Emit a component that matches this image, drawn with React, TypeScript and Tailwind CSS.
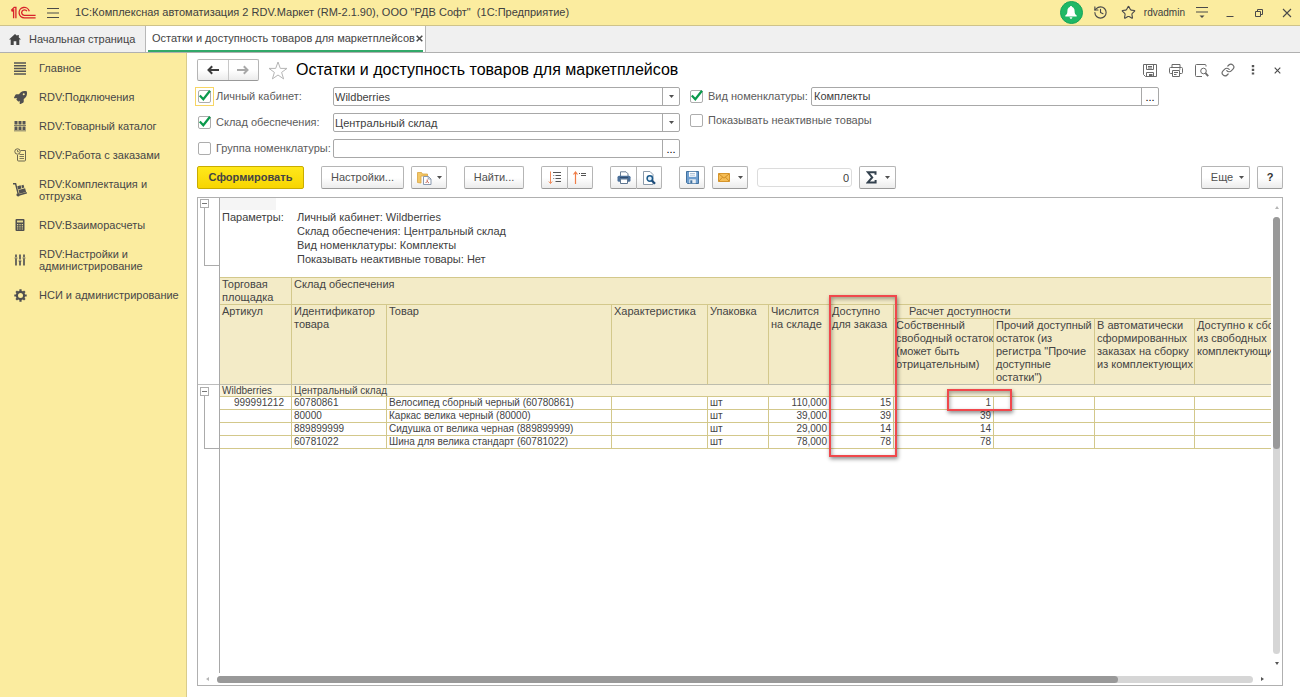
import type { ReactNode } from "react";
import { FaRocket } from "react-icons/fa";
import { History, Link, Star } from "lucide-react";

/* ---------- icons ---------- */

const Logo = () => (
  <svg width="26" height="14" viewBox="0 0 26 14" fill="none" stroke="#d8232a" strokeWidth="1.3" aria-hidden="true">
    <path d="M1.2 4.4 4.2 1.4h1.7v10.8M1.6 5.4 3.6 4v8.2" />
    <path d="M19.3 5.2A5.2 5.2 0 1 0 14.3 11.8H25.6" />
    <path d="M16.9 5.2A2.8 2.8 0 1 0 14.3 9.4H25.6" />
  </svg>
);

const BurgerIcon = () => (
  <svg width="14" height="12" viewBox="0 0 14 12" stroke="#4a4a4a" strokeWidth="1.2" aria-hidden="true">
    <path d="M1 1.5h12M1 6h12M1 10.5h12" />
  </svg>
);

const BellIcon = () => (
  <svg width="12" height="13" viewBox="0 0 12 13" fill="#fff" aria-hidden="true">
    <path d="M6 0c.7 0 1.1.5 1.1 1.1C8.800 1.600 9.600 3 9.600 5c0 2.600.8 3.600 2.100 4.600v.9H.3v-.9C1.600 8.600 2.400 7.600 2.400 5c0-2 .8-3.400 2.500-3.900C4.900.5 5.300 0 6 0zM4.600 11.300h2.800c0 .9-.6 1.500-1.400 1.500s-1.400-.6-1.400-1.500z" />
  </svg>
);

const UserMenuIcon = () => (
  <svg width="14" height="13" viewBox="0 0 14 13" stroke="#4a4a4a" strokeWidth="1.2" aria-hidden="true">
    <path d="M1 1.500h12M1 6h12" />
    <path d="M4.500 9.500h5L7 12z" fill="#4a4a4a" stroke="none" />
  </svg>
);

const MinimizeIcon = () => (
  <svg width="10" height="10" viewBox="0 0 10 10" stroke="#4a4a4a" aria-hidden="true">
    <path d="M1.500 8.500h7" />
  </svg>
);

const RestoreIcon = () => (
  <svg width="10" height="10" viewBox="0 0 10 10" fill="none" stroke="#4a4a4a" aria-hidden="true">
    <path d="M1.500 3.500h5v5h-5zM3.500 3.500v-2h5v5h-2" />
  </svg>
);

const CloseIcon = ({ size = 10, width = 1.1 }: { size?: number; width?: number }) => (
  <svg width={size} height={size} viewBox="0 0 10 10" stroke="#4a4a4a" strokeWidth={width} aria-hidden="true">
    <path d="M1 1l8 8M9 1 1 9" />
  </svg>
);

const HomeIcon = () => (
  <svg width="12" height="11" viewBox="0 0 12 11" fill="#444" aria-hidden="true">
    <path d="M6 0 0 5.600h1.700V11h3V7.300h2.600V11h3V5.600H12L9.800 3.500V1H8.300v1.100z" />
  </svg>
);

const LinesIcon = () => (
  <svg width="12" height="13" viewBox="0 0 12 13" stroke="#555" strokeWidth="1.300" aria-hidden="true">
    <path d="M0 1h12M0 3.750h12M0 6.500h12M0 9.250h12M0 12h12" />
  </svg>
);

const ShelvesIcon = () => (
  <svg width="12" height="12" viewBox="0 0 12 12" fill="#555" aria-hidden="true">
    <path d="M.5 1h3v3.500h-3zM4.500 1h3v3.500h-3zM8.500 1h3v3.500h-3zM.5 6.500h3V10h-3zM4.500 6.500h3V10h-3zM8.500 6.500h3V10h-3z" />
    <path d="M0 5h12v.8H0zM0 10.400h12v.9H0z" />
  </svg>
);

const OrdersIcon = () => (
  <svg width="13" height="14" viewBox="0 0 13 14" fill="none" stroke="#6b6650" aria-hidden="true">
    <path d="M6.500 2.500h5v9.500q0 1-1 1H4.500q-1 0-1-1V7" />
    <circle cx="3.500" cy="3.500" r="2.700" />
    <path d="M3.500 2v1.700h1.300M5.500 6.500H10M5.500 8.500H10M5.500 10.500H10" strokeWidth=".9" />
  </svg>
);

const TrolleyIcon = () => (
  <svg width="14" height="14" viewBox="0 0 14 14" fill="#505050" aria-hidden="true">
    <path d="M0 .8h2.600L5 10.200" fill="none" stroke="#505050" strokeWidth="1.400" />
    <circle cx="5.200" cy="11.800" r="1.800" />
    <path d="M6.800 11.700 13.800 9.800" stroke="#505050" strokeWidth="1.400" />
    <path d="m4.300 3.200 3.300-.9.9 3.200-3.300.9zM5.500 7.100l6.600-1.800 1 3.600-6.600 1.800zM8.300 2.400l2.200-.6.8 2.800-2.200.6z" />
  </svg>
);

const CalculatorIcon = () => (
  <svg width="10" height="12" viewBox="0 0 10 12" aria-hidden="true">
    <rect x=".5" width="9" height="12" rx="1" fill="#4f4f4f" />
    <path d="M2 1.500h6v2H2zM2 5h1.300v1.200H2zM4.400 5h1.200v1.200H4.400zM6.700 5H8v1.200H6.700zM2 7.200h1.300v1.200H2zM4.400 7.200h1.200v1.200H4.400zM6.700 7.200H8v1.200H6.700zM2 9.400h1.300v1.200H2zM4.400 9.400h1.200v1.200H4.400zM6.700 9.400H8v1.200H6.700z" fill="#e6d992" />
  </svg>
);

const SlidersIcon = () => (
  <svg width="12" height="12" viewBox="0 0 12 12" stroke="#555" strokeWidth="1.700" aria-hidden="true">
    <path d="M2 .5v2.500M2 4.500v7M6 .5v5M6 7v4.500M10 .5v2.500M10 4.500v7" />
    <path d="M.6 4h2.800M4.600 7h2.800M8.600 4h2.800" strokeWidth="1" />
  </svg>
);

const GearIcon = () => (
  <svg width="13" height="13" viewBox="-6.500 -6.500 13 13" fill="none" stroke="#4f4f4f" aria-hidden="true">
    <circle r="3.600" strokeWidth="2.200" />
    <path d="M0-6.200v2M0 6.200v-2M-6.200 0h2M6.200 0h-2M-4.300-4.300l1.400 1.400M4.300-4.300 2.900-2.900M-4.300 4.300l1.400-1.400M4.300 4.300 2.900 2.900" strokeWidth="2.200" />
  </svg>
);

const ArrowIcon = ({ dir, color }: { dir: "left" | "right"; color: string }) => (
  <svg width="12" height="10" viewBox="0 0 12 10" fill="none" stroke={color} strokeWidth="2" aria-hidden="true">
    {dir === "left" ? <path d="M12 5H2M5.200 1.300 1.500 5l3.700 3.700" /> : <path d="M0 5h10M6.800 1.300 10.500 5 6.800 8.700" />}
  </svg>
);

const FavouriteIcon = () => (
  <svg width="20" height="19" viewBox="0 0 20 19" fill="#fff" stroke="#b5b5b5" aria-hidden="true">
    <path d="M10 1l2.300 6.400h6.700l-5.400 4 2 6.500L10 14l-5.600 3.900 2-6.500-5.400-4h6.700z" />
  </svg>
);

const SaveIcon = () => (
  <svg width="14" height="13" viewBox="0 0 14 13" fill="none" stroke="#6a6a6a" aria-hidden="true">
    <path d="M.5.5h13v12h-11l-2-2zM3.500.5v5h7v-5M3.500 12.500v-4h7v4M5 2.500h4M5 4h4" />
    <path d="M6 10h3.500v2.500H6z" fill="#6a6a6a" stroke="none" />
  </svg>
);

const PrintIcon = () => (
  <svg width="14" height="13" viewBox="0 0 14 13" fill="none" stroke="#6a6a6a" aria-hidden="true">
    <path d="M3 3.500v-3h8v3M3 9.500H1.500q-1 0-1-1v-4q0-1 1-1h11q1 0 1 1v4q0 1-1 1H11M3.500 6.500h7v6h-7zM5 8.500h4M5 10.500h2.500M10 5h1.500" />
  </svg>
);

const PreviewIcon = () => (
  <svg width="14" height="13" viewBox="0 0 14 13" fill="none" stroke="#6a6a6a" aria-hidden="true">
    <path d="M11 2.500v-1q0-1-1-1H1.500q-1 0-1 1v10q0 1 1 1H7" />
    <circle cx="8.500" cy="7" r="2.800" />
    <path d="m10.500 9.200 2.700 3" strokeWidth="1.800" />
  </svg>
);

const DotsIcon = () => (
  <svg width="4" height="12" viewBox="0 0 4 12" fill="#555" aria-hidden="true">
    <path d="M.8 1h2.400v2.200H.8zM.8 4.700h2.400v2.200H.8zM.8 8.400h2.400v2.200H.8z" />
  </svg>
);

const Caret = () => (
  <svg width="5" height="3" viewBox="0 0 5 3" fill="#505050" aria-hidden="true">
    <path d="M0 0h5L2.500 3z" />
  </svg>
);

const FoldersIcon = () => (
  <svg width="15" height="14" viewBox="0 0 15 14" aria-hidden="true">
    <path d="M.5 11.500V1.500h4l1 1.500h5v2H4v7z" fill="#f3c766" stroke="#d9a441" strokeWidth=".8" />
    <path d="M6.500 5.500h5l2.500 2.500v5.500H6.500z" fill="#fff" stroke="#7d8fa6" strokeWidth=".9" />
    <path d="M11.200 5.500V8H14" fill="none" stroke="#7d8fa6" strokeWidth=".8" />
    <path d="M10.200 8.500v2M8.600 12l1.600-1.600 1.700 1.600" fill="none" stroke="#c05a4a" />
  </svg>
);

const ExpandIcon = () => (
  <svg width="14" height="14" viewBox="0 0 14 14" fill="none" aria-hidden="true">
    <path d="M2.500.5v12M.8 10.500l1.700 2 1.700-2" stroke="#f08a5a" />
    <path d="M5 1.500h8M7.500 4.500H13M7.500 7.500H13M7.500 10.500H13" stroke="#555" />
    <path d="M5 4.500h1.300M5 7.500h1.300" stroke="#999" />
  </svg>
);

const CollapseIcon = () => (
  <svg width="14" height="14" viewBox="0 0 14 14" fill="none" aria-hidden="true">
    <path d="M2.500 13V1M.5 3.500l2-2.500 2 2.500" stroke="#f07d48" strokeWidth="1.200" />
    <path d="M6 2.500h1M8 2.500h5M8 4.500h5" stroke="#555" />
  </svg>
);

const PrinterColorIcon = () => (
  <svg width="14" height="13" viewBox="0 0 14 13" aria-hidden="true">
    <path d="M3.500 5V.8h5.500L11 2.800V5" fill="#fff" stroke="#6b7f96" />
    <rect x=".5" y="4.800" width="13" height="6" rx="1.500" fill="#4a6f99" />
    <path d="M3.500 8h7v4.500h-7z" fill="#fff" stroke="#5f7690" />
    <path d="M3 6.500h8" stroke="#2f4c70" />
  </svg>
);

const PreviewColorIcon = () => (
  <svg width="14" height="14" viewBox="0 0 14 14" fill="none" aria-hidden="true">
    <path d="M1.500.5H8L11 3.500v10H1.500z" fill="#fff" stroke="#8b9bab" />
    <circle cx="7.800" cy="7.500" r="2.700" fill="#e3f0fa" stroke="#1b5a8c" strokeWidth="1.500" />
    <path d="m9.800 9.500 3.200 3.300" stroke="#1b4a78" strokeWidth="2.200" />
  </svg>
);

const DisketteIcon = () => (
  <svg width="13" height="13" viewBox="0 0 13 13" aria-hidden="true">
    <path d="M.5.500h12v12h-11l-1-1z" fill="#6f9fd0" stroke="#41719f" />
    <path d="M3 .8h7.200v5H3z" fill="#fff" />
    <path d="M4 2.500h5M4 4.200h5" stroke="#9ab5cf" strokeWidth=".8" />
    <path d="M3.300 8.300h6.500v4H3.300z" fill="#e8eef4" />
    <path d="M4.300 9.300h2v3h-2z" fill="#41719f" />
  </svg>
);

const MailIcon = () => (
  <svg width="12" height="9" viewBox="0 0 12 9" aria-hidden="true">
    <path d="M.5.5h11v8H.5z" fill="#f5bd55" stroke="#d6952c" />
    <path d="m.8.8 5.200 4.400L11.200.8M.8 8.200l3.700-4M11.200 8.200l-3.700-4" fill="none" stroke="#c4811c" strokeWidth=".8" />
  </svg>
);

const SigmaIcon = () => (
  <svg width="11" height="13" viewBox="0 0 11 13" fill="none" stroke="#33414e" strokeWidth="2" aria-hidden="true">
    <path d="M9.500 3.800V1.200H1.800L6.200 6.400 1.600 11.600h8V9" strokeLinejoin="miter" />
  </svg>
);

/* ---------- controls ---------- */

const raised = "flex h-[23px] items-center justify-center rounded-[2px] border border-[#b5b5b5] border-b-[#999] bg-linear-to-b from-white from-50% to-[#ececec]";

function ToolButton({ label, className, children }: { label?: string; className: string; children: ReactNode }) {
  return (
    <button type="button" aria-label={label} className={`${raised} ${className}`}>
      {children}
    </button>
  );
}

function CheckBox({ id, label, checked, focused, className }: { id: string; label: string; checked?: boolean; focused?: boolean; className?: string }) {
  return (
    <div className={`flex h-[19px] shrink-0 items-center gap-[5px] ${className ?? ""}`}>
      <span className={`relative ml-px flex size-[13px] ${focused ? "ring-1 ring-[#f7d564] ring-offset-2" : ""}`}>
        <input id={id} type="checkbox" defaultChecked={checked} className="peer size-[13px] appearance-none rounded-[2px] border border-[#adadad] bg-white" />
        <svg width="13" height="13" viewBox="0 0 13 13" className="pointer-events-none absolute left-0 top-0 hidden overflow-visible peer-checked:block" fill="none" stroke="#0a9a4c" strokeWidth="2.200" aria-hidden="true">
          <path d="M1.800 5.500 5.300 9.300 12 .8" />
        </svg>
      </span>
      <label htmlFor={id} className="whitespace-nowrap text-[#5c5c5c]">{label}</label>
    </div>
  );
}

const field = "relative flex h-[19px] min-w-0 rounded-[2px] border border-[#a8a8a8] bg-white";

function SelectField({ label, value }: { label: string; value: string }) {
  return (
    <div className={`${field} flex-1`}>
      <select aria-label={label} className="w-full appearance-none bg-transparent pl-px pr-5 leading-4 text-[#404040]">
        <option>{value}</option>
      </select>
      <span className="pointer-events-none absolute inset-y-0 right-0 flex w-[17px] items-center justify-center border-l border-[#a8a8a8]">
        <Caret />
      </span>
    </div>
  );
}

function PickField({ label, value }: { label: string; value: string }) {
  return (
    <div className={`${field} flex-1`}>
      <input aria-label={label} defaultValue={value} className="min-w-0 flex-1 bg-transparent px-[2px] text-[#404040]" />
      <button type="button" aria-label={`${label}: выбрать`} className="w-[17px] border-l border-[#a8a8a8] leading-4">...</button>
    </div>
  );
}

/* ---------- data ---------- */

const menu: { icon: ReactNode; text: ReactNode }[] = [
  { icon: <LinesIcon />, text: "Главное" },
  { icon: <FaRocket size={13} color="#4f4f4f" />, text: "RDV:Подключения" },
  { icon: <ShelvesIcon />, text: "RDV:Товарный каталог" },
  { icon: <OrdersIcon />, text: "RDV:Работа с заказами" },
  { icon: <TrolleyIcon />, text: <>RDV:Комплектация и<br />отгрузка</> },
  { icon: <CalculatorIcon />, text: "RDV:Взаиморасчеты" },
  { icon: <SlidersIcon />, text: <>RDV:Настройки и<br />администрирование</> },
  { icon: <GearIcon />, text: "НСИ и администрирование" },
];

const rows = [
  { sku: "999991212", id: "60780861", name: "Велосипед сборный черный (60780861)", stock: "110,000", avail: "15", own: "1" },
  { sku: "", id: "80000", name: "Каркас велика черный (80000)", stock: "39,000", avail: "39", own: "39" },
  { sku: "", id: "889899999", name: "Сидушка от велика черная (889899999)", stock: "29,000", avail: "14", own: "14" },
  { sku: "", id: "60781022", name: "Шина для велика стандарт (60781022)", stock: "78,000", avail: "78", own: "78" },
];

const th = "border-b border-r border-[#d3c88b] bg-[#f3ebc7] px-[2px] text-left align-top font-normal";
const thLast = "border-b border-r border-b-[#bdbdad] border-r-[#d3c88b] bg-[#f3ebc7] px-[2px] text-left align-top font-normal";
const td = "h-[13px] overflow-hidden whitespace-nowrap border-b border-r border-[#d3c88b] px-[2px] py-0";

/* ---------- page parts ---------- */

function TitleBar() {
  return (
    <header className="flex h-[26px] shrink-0 items-center border-b border-[#cfc38a] bg-[#fbec9f] px-2 text-[#404040]">
      <span className="ml-[2px]"><Logo /></span>
      <button type="button" aria-label="Меню" className="ml-[10px]"><BurgerIcon /></button>
      <span className="ml-[15px] flex-1 whitespace-pre text-[11px]">{'1С:Комплексная автоматизация 2 RDV.Маркет (RM-2.1.90), ООО "РДВ Софт"  (1С:Предприятие)'}</span>
      <button type="button" aria-label="Уведомления" className="flex size-[23px] items-center justify-center rounded-full border border-[#17a35a] bg-[#1fb866]"><BellIcon /></button>
      <button type="button" aria-label="История" className="ml-[10px]"><History size={15} strokeWidth={1.800} color="#4a4a4a" /></button>
      <button type="button" aria-label="Избранное" className="ml-[13px]"><Star size={15} strokeWidth={1.800} color="#4a4a4a" /></button>
      <span className="ml-2 text-[10px]">rdvadmin</span>
      <button type="button" aria-label="Сервис" className="ml-[10px]"><UserMenuIcon /></button>
      <button type="button" aria-label="Свернуть" className="ml-4"><MinimizeIcon /></button>
      <button type="button" aria-label="Развернуть" className="ml-[19px]"><RestoreIcon /></button>
      <button type="button" aria-label="Закрыть" className="ml-[18px]"><CloseIcon /></button>
    </header>
  );
}

function TabBar() {
  return (
    <nav className="flex h-[27px] shrink-0 border-b border-[#b0b0b0] bg-[#f0f0f0] text-[11px] text-[#444]">
      <a href="#home" className="flex w-[146px] items-center gap-2 border-r border-[#b8b8b8] pl-[9px]">
        <HomeIcon />
        Начальная страница
      </a>
      <div className="flex w-[280px] border-r border-[#b8b8b8] bg-white px-[2px]">
        <div className="flex flex-1 items-center justify-between border-b-2 border-[#32a869] pl-1">
          <a href="#report" className="whitespace-nowrap">Остатки и доступность товаров для маркетплейсов</a>
          <button type="button" aria-label="Закрыть вкладку"><CloseIcon size={7} width={2.2} /></button>
        </div>
      </div>
    </nav>
  );
}

function Sidebar() {
  return (
    <aside className="w-[187px] shrink-0 border-r border-[#d9cc8c] bg-[#fbec9f] pt-[9px]">
      <ul className="flex flex-col gap-[17px] text-[11px] leading-3 text-[#474747]">
        {menu.map((item, i) => (
          <li key={i}>
            <a href="#section" className="flex items-center">
              <span className="ml-[13px] flex h-3 w-[14px] items-center justify-center">{item.icon}</span>
              <span className="ml-3 whitespace-nowrap">{item.text}</span>
            </a>
          </li>
        ))}
      </ul>
    </aside>
  );
}

function FormHeader() {
  return (
    <div className="flex h-[22px] items-center">
      <div className="flex h-[22px] w-[62px] rounded-[2px] border border-[#b5b5b5] border-b-[#999] bg-linear-to-b from-white from-50% to-[#ececec]">
        <button type="button" aria-label="Назад" className="flex flex-1 items-center justify-center border-r border-[#c8c8c8]"><ArrowIcon dir="left" color="#3c3c3c" /></button>
        <button type="button" aria-label="Вперед" className="flex flex-1 items-center justify-center"><ArrowIcon dir="right" color="#a8a8a8" /></button>
      </div>
      <button type="button" aria-label="Добавить в избранное" className="ml-[9px]"><FavouriteIcon /></button>
      <h1 className="ml-2 flex-1 whitespace-nowrap text-base leading-5 text-black">Остатки и доступность товаров для маркетплейсов</h1>
      <div className="flex items-center gap-3">
        <button type="button" aria-label="Сохранить"><SaveIcon /></button>
        <button type="button" aria-label="Печать"><PrintIcon /></button>
        <button type="button" aria-label="Просмотр"><PreviewIcon /></button>
        <button type="button" aria-label="Ссылка"><Link size={14} strokeWidth={2} color="#6a6a6a" /></button>
        <button type="button" aria-label="Ещё" className="flex w-3 justify-center"><DotsIcon /></button>
        <button type="button" aria-label="Закрыть форму" className="flex w-3 justify-center"><CloseIcon size={7} width={1.600} /></button>
      </div>
    </div>
  );
}

function Filters() {
  return (
    <div className="mt-[6px] flex gap-[9px] pr-[124px]">
      <div className="flex flex-[483] flex-col gap-[7px]">
        <div className="flex">
          <CheckBox id="account" label="Личный кабинет:" checked focused className="w-[136px]" />
          <SelectField label="Личный кабинет" value="Wildberries" />
        </div>
        <div className="flex">
          <CheckBox id="warehouse" label="Склад обеспечения:" checked className="w-[136px]" />
          <SelectField label="Склад обеспечения" value="Центральный склад" />
        </div>
        <div className="flex">
          <CheckBox id="group" label="Группа номенклатуры:" className="w-[136px]" />
          <PickField label="Группа номенклатуры" value="" />
        </div>
      </div>
      <div className="flex flex-[470] flex-col gap-[5px]">
        <div className="flex">
          <CheckBox id="kind" label="Вид номенклатуры:" checked className="w-[122px]" />
          <PickField label="Вид номенклатуры" value="Комплекты" />
        </div>
        <CheckBox id="inactive" label="Показывать неактивные товары" />
      </div>
    </div>
  );
}

function Toolbar() {
  return (
    <div className="mt-2 flex items-center gap-[17px] text-[#505050]">
      <button type="button" className="h-[23px] w-[107px] rounded-[2px] border border-[#c9ac00] bg-linear-to-b from-[#ffe81a] to-[#f7d500] font-bold text-[#444]">Сформировать</button>
      <div className="flex gap-[7px]">
        <ToolButton className="w-[83px]">Настройки...</ToolButton>
        <ToolButton label="Варианты отчета" className="w-[36px] gap-[5px]"><FoldersIcon /><Caret /></ToolButton>
      </div>
      <ToolButton className="w-[60px]">Найти...</ToolButton>
      <div className="flex">
        <ToolButton label="Развернуть группы" className="w-[27px] rounded-r-none"><ExpandIcon /></ToolButton>
        <ToolButton label="Свернуть группы" className="w-[25px] rounded-l-none border-l-0"><CollapseIcon /></ToolButton>
      </div>
      <div className="flex">
        <ToolButton label="Печать отчета" className="w-[27px] rounded-r-none"><PrinterColorIcon /></ToolButton>
        <ToolButton label="Предварительный просмотр" className="w-[25px] rounded-l-none border-l-0"><PreviewColorIcon /></ToolButton>
      </div>
      <div className="flex items-center gap-[7px]">
        <ToolButton label="Сохранить отчет" className="w-[26px]"><DisketteIcon /></ToolButton>
        <ToolButton label="Отправить" className="w-[36px] gap-2"><MailIcon /><Caret /></ToolButton>
        <input aria-label="Сумма" defaultValue="0" className="ml-[2px] h-[19px] w-[95px] rounded-[3px] border border-[#dcdcdc] px-[2px] text-right text-[#404040]" />
        <ToolButton label="Показатели" className="w-[37px] gap-2"><SigmaIcon /><Caret /></ToolButton>
      </div>
      <div className="ml-auto flex gap-[7px]">
        <ToolButton className="w-[49px] gap-[6px] pl-1">Еще <Caret /></ToolButton>
        <ToolButton label="Справка" className="w-[26px] font-bold text-[#333]">?</ToolButton>
      </div>
    </div>
  );
}

function GroupMark({ className }: { className: string }) {
  return (
    <div className={`flex flex-col ${className}`}>
      <button type="button" aria-label="Свернуть группу" className="ml-[2px] flex size-[9px] shrink-0 items-center justify-center border border-[#adadad] bg-white">
        <span className="h-px w-[5px] bg-[#777]" />
      </button>
      <div className="ml-[6px] flex-1 border-b border-l border-[#ababab]" />
    </div>
  );
}

function ReportTable() {
  return (
    <table className="w-[1075px] table-fixed border-separate border-spacing-0 text-[#444]">
      <colgroup>
        <col className="w-[72px]" />
        <col className="w-[95px]" />
        <col className="w-[225px]" />
        <col className="w-[96px]" />
        <col className="w-[61px]" />
        <col className="w-[61px]" />
        <col className="w-[64px]" />
        <col className="w-[100px]" />
        <col className="w-[101px]" />
        <col className="w-[100px]" />
        <col className="w-[100px]" />
      </colgroup>
      <thead className="text-[11px] leading-[13px]">
        <tr className="h-7">
          <th className={`${th} border-t`}>Торговая<br />площадка</th>
          <th colSpan={10} className={`${th} border-t`}>Склад обеспечения</th>
        </tr>
        <tr className="h-[14px]">
          <th rowSpan={2} className={thLast}>Артикул</th>
          <th rowSpan={2} className={thLast}>Идентификатор<br />товара</th>
          <th rowSpan={2} className={thLast}>Товар</th>
          <th rowSpan={2} className={thLast}>Характеристика</th>
          <th rowSpan={2} className={thLast}>Упаковка</th>
          <th rowSpan={2} className={thLast}>Числится<br />на складе</th>
          <th rowSpan={2} className={thLast}>Доступно<br />для заказа</th>
          <th colSpan={4} className={th}><span className="pl-[13px]">Расчет доступности</span></th>
        </tr>
        <tr className="h-[66px] whitespace-nowrap">
          <th className={thLast}>Собственный<br />свободный остаток<br />(может быть<br />отрицательным)</th>
          <th className={thLast}>Прочий доступный<br />остаток (из<br />регистра "Прочие<br />доступные<br />остатки")</th>
          <th className={thLast}>В автоматически<br />сформированных<br />заказах на сборку<br />из комплектующих</th>
          <th className={thLast}>Доступно к сборке<br />из свободных<br />комплектующих</th>
        </tr>
      </thead>
      <tbody className="text-[10px] leading-3">
        <tr className="bg-[#f9f3da] leading-[11px]">
          <td className="border-b border-r border-[#d3c88b] px-[2px] py-0">Wildberries</td>
          <td colSpan={10} className="border-b border-[#d3c88b] px-[2px] py-0">Центральный склад</td>
        </tr>
        {rows.map((r) => (
          <tr key={r.id}>
            <td className={`${td} pr-[7px] text-right`}>{r.sku}</td>
            <td className={td}>{r.id}</td>
            <td className={td}>{r.name}</td>
            <td className={td} />
            <td className={td}>шт</td>
            <td className={`${td} text-right`}>{r.stock}</td>
            <td className={`${td} text-right`}>{r.avail}</td>
            <td className={`${td} text-right`}>{r.own}</td>
            <td className={td} />
            <td className={td} />
            <td className={td} />
          </tr>
        ))}
      </tbody>
    </table>
  );
}

function Report() {
  return (
    <section className="mt-2 flex flex-1 flex-col border border-[#b0b0b0] bg-white">
      <div className="flex min-h-0 flex-1">
        <div className="flex w-[22px] shrink-0 flex-col border-r border-[#a8a8a8]">
          <div className="h-[187px] border-b border-[#bdbdbd] pt-px">
            <GroupMark className="h-[67px]" />
          </div>
          <GroupMark className="mt-[2px] h-[62px]" />
        </div>
        <div className="relative min-w-0 flex-1 overflow-hidden">
          <div className="flex h-[79px] text-[11px] leading-[14px] text-[#404040]">
            <div className="w-[77px] px-[2px]">
              <div className="-ml-[2px] h-3 w-[56px] bg-[#f5f5f5]" />
              Параметры:
            </div>
            <div className="pt-3">
              Личный кабинет: Wildberries<br />
              Склад обеспечения: Центральный склад<br />
              Вид номенклатуры: Комплекты<br />
              Показывать неактивные товары: Нет
            </div>
          </div>
          <ReportTable />
          <div className="pointer-events-none absolute left-[609px] top-[97px] h-[162px] w-[68px] border-2 border-[#f0484c] shadow-[1px_2px_4px_rgba(0,0,0,0.45),inset_1px_2px_4px_rgba(0,0,0,0.35)]" />
          <div className="pointer-events-none absolute left-[727px] top-[191px] h-[22px] w-[65px] border-2 border-[#f0484c] shadow-[1px_2px_4px_rgba(0,0,0,0.45),inset_1px_2px_4px_rgba(0,0,0,0.35)]" />
        </div>
        <div className="flex w-[11px] shrink-0 flex-col items-center pt-2">
          <svg width="4" height="3" viewBox="0 0 4 3" fill="#b5b5b5" aria-hidden="true"><path d="M0 3h4L2 0z" /></svg>
          <div className="mt-2 w-[7px] flex-1 rounded-full bg-[#d6d6d6]">
            <div className="h-[53%] rounded-full bg-[#999]" />
          </div>
          <svg className="mb-2 mt-2" width="4" height="3" viewBox="0 0 4 3" fill="#555" aria-hidden="true"><path d="M0 0h4L2 3z" /></svg>
        </div>
      </div>
      <div className="flex h-3 items-center pl-2 pr-[18px]">
        <svg width="3" height="4" viewBox="0 0 3 4" fill="#b5b5b5" aria-hidden="true"><path d="M3 0v4L0 2z" /></svg>
        <div className="ml-2 mr-2 h-[7px] flex-1 rounded-full bg-[#d6d6d6]">
          <div className="h-[7px] w-[87%] rounded-full bg-[#999]" />
        </div>
        <svg width="3" height="4" viewBox="0 0 3 4" fill="#555" aria-hidden="true"><path d="M0 0v4l3-2z" /></svg>
      </div>
    </section>
  );
}

export default function App() {
  return (
    <div className="flex min-h-screen flex-col overflow-hidden bg-white font-['Liberation_Sans',Arial,sans-serif] text-[11px]">
      <TitleBar />
      <TabBar />
      <div className="flex flex-1">
        <Sidebar />
        <main className="flex min-w-0 flex-1 flex-col pb-[11px] pl-[10px] pr-[17px] pt-[6px]">
          <FormHeader />
          <Filters />
          <Toolbar />
          <Report />
        </main>
      </div>
    </div>
  );
}
